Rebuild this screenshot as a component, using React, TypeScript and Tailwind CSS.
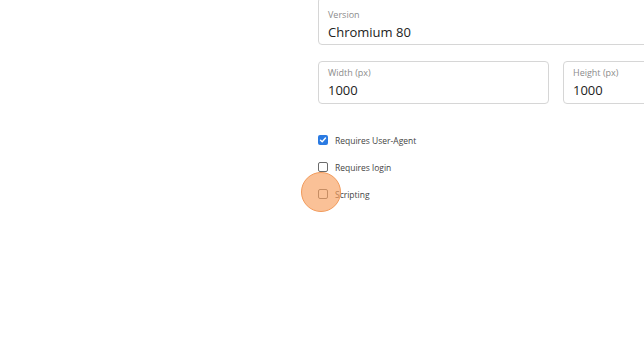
import React from 'react'

const font = { fontFamily: '"Open Sans", "Noto Sans", sans-serif' }

function Field({ label, value, className = '' }: { label: string; value: string; className?: string }) {
  return (
    <div className={`flex flex-col rounded-[4px] border border-[#d6d6d6] pl-[9px] pr-[10px] ${className}`}>
      <span className="text-[9px] leading-[12px] text-[#8c8c8c]">{label}</span>
      <span className="mt-[3px] text-[13px] leading-[17px] text-[#222]">{value}</span>
    </div>
  )
}

function Check({ label, checked = false }: { label: string; checked?: boolean }) {
  return (
    <div className="flex h-[27px] items-center gap-[7px]">
      {checked ? (
        <span className="flex h-[10px] w-[10px] items-center justify-center rounded-[2px] bg-[#2a7ae2]">
          <svg width="8" height="8" viewBox="0 0 8 8" fill="none">
            <path d="M1.5 4.2 L3.2 5.8 L6.5 2" stroke="white" strokeWidth="1.4" strokeLinecap="round" strokeLinejoin="round" />
          </svg>
        </span>
      ) : (
        <span className="h-[10px] w-[10px] rounded-[2px] border border-[#6b6b6b] bg-white" />
      )}
      <span className="mt-[3px] text-[8.5px] text-[#444]">{label}</span>
    </div>
  )
}

export default function App() {
  return (
    <div className="relative h-[359px] w-[644px] overflow-hidden bg-white" style={font}>
      <div className="ml-[318px] mt-[-3px] flex w-[476px] flex-col">
        <Field label="Version" value="Chromium 80" className="h-[48px] justify-end pb-[3px]" />
        <div className="mt-[16px] flex gap-[14px]">
          <Field label="Width (px)" value="1000" className="h-[43px] flex-1 justify-center" />
          <Field label="Height (px)" value="1000" className="h-[43px] flex-1 justify-center" />
        </div>
        <div className="mt-[22px] flex flex-col">
          <Check label="Requires User-Agent" checked />
          <Check label="Requires login" />
          <Check label="Scripting" />
        </div>
      </div>
      <div className="absolute left-[301px] top-[172px] h-[40px] w-[40px] rounded-full border-[1.5px] border-[#f29a5a] bg-[rgba(248,160,95,0.65)]" />
    </div>
  )
}
